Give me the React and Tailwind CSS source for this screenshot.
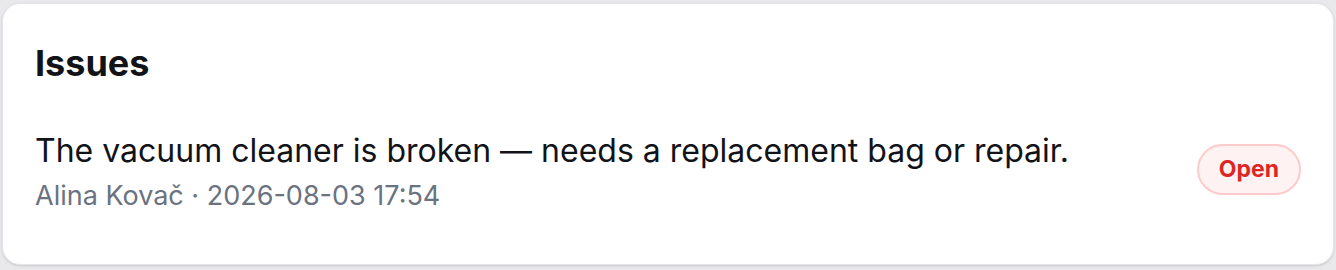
export default function App() {
  return (
    <div className="min-h-[270px] bg-[#e9e9ec] px-[2px] pt-[3px] pb-[5px] font-['Inter',sans-serif]">
      <div className="h-[262px] rounded-[18px] border border-[#e4e4e8] bg-white px-[32px] pt-[37px] shadow-sm">
        <h2 className="text-[36px] font-bold leading-[44px] text-[#111318]">
          Issues
        </h2>
        <div className="mt-[46px] flex items-center justify-between">
          <div>
            <p className="text-[32px] leading-[40px] text-[#111318]">
              The vacuum cleaner is broken — needs a replacement bag or repair.
            </p>
            <p className="mt-[8px] text-[27px] leading-[34px] text-[#6b7280]">
              Alina Kovač · 2026-08-03 17:54
            </p>
          </div>
          <span className="mb-[5px] rounded-full border-2 border-[#fecaca] bg-[#fef2f2] px-[20px] py-[11px] text-[23px] font-bold leading-[25px] text-[#dc2626]">
            Open
          </span>
        </div>
      </div>
    </div>
  );
}
